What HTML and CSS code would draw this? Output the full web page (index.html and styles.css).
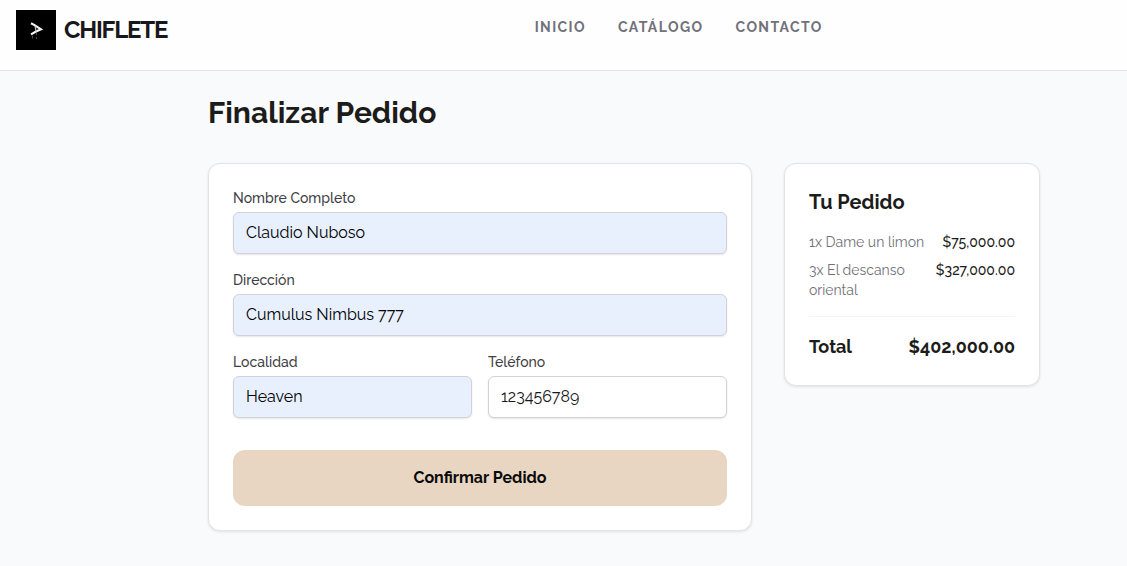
FILE: index.html
```html
<!DOCTYPE html>
<html lang="es">
<head>
  <meta charset="UTF-8">
  <meta name="viewport" content="width=device-width, initial-scale=1.0">
  <title>Chiflete - Finalizar Pedido</title>
  <link rel="stylesheet" href="styles.css">
</head>
<body>
  <header class="header">
    <a href="#" class="brand">
      <svg class="logo" viewBox="0 0 40 40" aria-hidden="true">
        <rect width="40" height="40" fill="#000"/>
        <path d="M15 13.3 L19 15.3 L25 19.3 L20 21.5 L15 24.4" fill="none" stroke="#f4f4f4" stroke-width="2.1"/>
        <path d="M19 16 L20.2 21.5" fill="none" stroke="#bbb" stroke-width="1.3"/>
        <path d="M16.5 25.5v3M20.5 23v2M20.5 27v2" fill="none" stroke="#4a4a4a" stroke-width="1"/>
      </svg>
      <span>CHIFLETE</span>
    </a>
    <nav class="nav">
      <a href="#">INICIO</a>
      <a href="#">CATÁLOGO</a>
      <a href="#">CONTACTO</a>
    </nav>
  </header>

  <main class="checkout">
    <h1>Finalizar Pedido</h1>
    <div class="columns">
      <form class="card form">
        <div class="field">
          <label for="nombre">Nombre Completo</label>
          <input type="text" id="nombre" class="filled" value="Claudio Nuboso">
        </div>
        <div class="field">
          <label for="direccion">Dirección</label>
          <input type="text" id="direccion" class="filled" value="Cumulus Nimbus 777">
        </div>
        <div class="field-row">
          <div class="field">
            <label for="localidad">Localidad</label>
            <input type="text" id="localidad" class="filled" value="Heaven">
          </div>
          <div class="field">
            <label for="telefono">Teléfono</label>
            <input type="tel" id="telefono" value="123456789">
          </div>
        </div>
        <button type="submit" class="confirm">Confirmar Pedido</button>
      </form>

      <aside class="card summary">
        <h2>Tu Pedido</h2>
        <ul class="items">
          <li><span class="item-name">1x Dame un limon</span><span>$75,000.00</span></li>
          <li><span class="item-name">3x El descanso oriental</span><span>$327,000.00</span></li>
        </ul>
        <div class="total">
          <span>Total</span>
          <span>$402,000.00</span>
        </div>
      </aside>
    </div>
  </main>
</body>
</html>
```

FILE: styles.css
```css
* {
  box-sizing: border-box;
}

body {
  margin: 0;
  background-color: #f9fafc;
  color: #1c1c1a;
  font-family: Raleway, Lato, sans-serif;
  font-size: 16px;
  line-height: 24px;
}

h1,
h2 {
  margin: 0;
  font-weight: 700;
}

/* Header */
.header {
  display: grid;
  grid-template-columns: 9fr auto 5fr;
  align-items: start;
  padding: 10px 16px 20px;
  background-color: #fefefe;
  border-bottom: 1px solid #e2e3e6;
}

.brand {
  display: flex;
  align-items: center;
  gap: 8px;
  color: #18181b;
  font-size: 24px;
  font-weight: 700;
  letter-spacing: -0.05em;
  text-decoration: none;
}

.logo {
  width: 40px;
  height: 40px;
}

.nav {
  display: flex;
  gap: 32px;
  padding-top: 7px;
}

.nav a {
  color: #71717a;
  font-size: 14px;
  font-weight: 700;
  line-height: 20px;
  letter-spacing: 0.1em;
  text-decoration: none;
}

/* Checkout */
.checkout {
  padding: 24px 87px 32px 208px;
}

.checkout h1 {
  margin-bottom: 32px;
  font-size: 30px;
  line-height: 36px;
}

.columns {
  display: grid;
  grid-template-columns: repeat(3, 1fr);
  gap: 32px;
  align-items: start;
}

.card {
  padding: 24px;
  background-color: #fff;
  border: 1px solid #e2e3e6;
  border-radius: 12px;
  box-shadow: 0 1px 3px rgba(0, 0, 0, 0.1);
}

.form {
  grid-column: span 2;
  display: flex;
  flex-direction: column;
  gap: 16px;
}

.field {
  display: flex;
  flex-direction: column;
  gap: 4px;
}

.field-row {
  display: grid;
  grid-template-columns: 1fr 1fr;
  gap: 16px;
}

.field label {
  color: #3f3f46;
  font-size: 14px;
  font-weight: 500;
  line-height: 20px;
}

.field input {
  width: 100%;
  height: 42px;
  padding: 7px 12px 9px;
  background-color: #fff;
  border: 1px solid #d1d3d8;
  border-radius: 6px;
  box-shadow: 0 1px 2px rgba(0, 0, 0, 0.1);
  color: #18181b;
  font: inherit;
}

.field .filled {
  background-color: #e8f0fe;
  color: #000;
}

.confirm {
  margin-top: 16px;
  padding: 16px;
  background-color: #e8d6c2;
  border: none;
  border-radius: 12px;
  color: #0a0a0a;
  font: inherit;
  font-weight: 700;
  cursor: pointer;
}

/* Order summary */
.summary h2 {
  margin-bottom: 16px;
  font-size: 20px;
  line-height: 28px;
}

.items {
  display: flex;
  flex-direction: column;
  gap: 8px;
  margin: 0;
  padding: 0 0 16px;
  border-bottom: 1px solid #f3f4f6;
  list-style: none;
  font-size: 14px;
  font-weight: 500;
  line-height: 20px;
}

.items li {
  display: flex;
  justify-content: space-between;
  gap: 8px;
}

.item-name {
  color: #71717a;
  font-weight: 400;
}

.total {
  display: flex;
  justify-content: space-between;
  padding-top: 16px;
  font-size: 18px;
  font-weight: 700;
  line-height: 28px;
}
```
